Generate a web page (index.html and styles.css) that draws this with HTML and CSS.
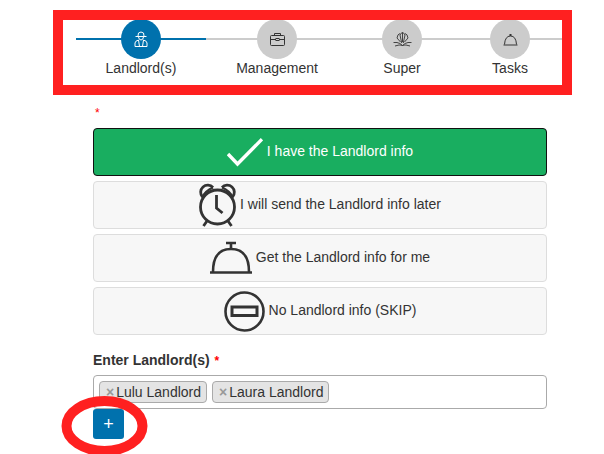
FILE: index.html
```html
<!DOCTYPE html>
<html>

<head>
    <title>Landlord(s)</title>
    <meta charset="utf-8">
    <meta name="viewport" content="width=device-width, initial-scale=1.0">
    <link rel="stylesheet" href="styles.css">
</head>

<body>
    <nav class="trin">
        <div class="trinpunkt aktiv">
            <span class="cirkel">
                <svg width="14" height="16" viewBox="0 0 14 16" fill="none" stroke="currentColor" stroke-width="1">
                    <path d="M4 5 Q3.500 1 7 1 Q10.500 1 10 5" />
                    <path d="M1.500 5.500 H12.500" />
                    <path d="M4.500 6 Q5 9 7 9 Q9 9 9.500 6" />
                    <path d="M1 15.500 V12 Q1 10 4.500 9 L5.500 15.500 H8.500 L9.500 9 Q13 10 13 12 V15.500 Z" />
                </svg>
            </span>
            <span class="navn">Landlord(s)</span>
        </div>
        <div class="trinpunkt">
            <span class="cirkel">
                <svg width="15" height="13" viewBox="0 0 15 13" fill="none" stroke="currentColor" stroke-width="1">
                    <rect x="0.500" y="2.500" width="14" height="10" rx="1" />
                    <path d="M4.500 2.500 V0.500 H10.500 V2.500" />
                    <path d="M0.500 6.500 H6 M9 6.500 H14.500" />
                    <rect x="6" y="5.500" width="3" height="2" />
                </svg>
            </span>
            <span class="navn">Management</span>
        </div>
        <div class="trinpunkt">
            <span class="cirkel">
                <svg width="19" height="16" viewBox="0 0 19 16" fill="none" stroke="currentColor" stroke-width="0.900">
                    <path d="M8.700 12 L7 4 Q9.500 -1 12 4 L10.300 12" />
                    <path d="M9.500 1.500 V11" />
                    <path d="M7.500 11 L4 7 Q4.500 3 7 2.500" />
                    <path d="M11.500 11 L15 7 Q14.500 3 12 2.500" />
                    <path d="M0.500 11.500 H4 Q7 12 9.500 14.500 Q12 12 15 11.500 H18.500" />
                    <path d="M2 15 L6 14 Q8 14 9.500 14.500 Q11 14 13 14 L17 15" />
                </svg>
            </span>
            <span class="navn">Super</span>
        </div>
        <div class="trinpunkt">
            <span class="cirkel">
                <svg width="15" height="13" viewBox="0 0 15 13" fill="none" stroke="currentColor" stroke-width="1">
                    <path d="M1.500 11.500 Q2 3 7.500 3 Q13 3 13.500 11.500" />
                    <path d="M0.500 12 H14.500" />
                    <path d="M7.500 3 V1" stroke-width="2" />
                </svg>
            </span>
            <span class="navn">Tasks</span>
        </div>
    </nav>

    <main class="formular">
        <p class="krav"><span class="stjerne">*</span></p>

        <div class="valg">
            <button class="valgknap valgt">
                <svg width="36" height="29" viewBox="0 0 36 29" fill="none" stroke="currentColor" stroke-width="3.400">
                    <path d="M1 16 L10.500 26 L35 1.200" />
                </svg>
                <span class="tekst">I have the Landlord info</span>
            </button>
            <button class="valgknap">
                <svg width="37" height="44" viewBox="0 0 37 44" fill="none" stroke="currentColor" stroke-width="2.800">
                    <circle cx="18.500" cy="24" r="17" />
                    <path d="M3.500 14 A7 7 0 0 1 14 4.500 M33.500 14 A7 7 0 0 0 23 4.500" />
                    <path d="M3.500 14 Q6 8 14 4.500 M33.500 14 Q31 8 23 4.500" stroke-width="2" />
                    <path d="M17.500 12 V25 L23.500 30" />
                    <path d="M8 38 L4.500 43 M29 38 L32.500 43" />
                </svg>
                <span class="tekst">I will send the Landlord info later</span>
            </button>
            <button class="valgknap">
                <svg width="42" height="34" viewBox="0 0 42 34" fill="none" stroke="currentColor" stroke-width="2.600">
                    <path d="M3 31 Q3 8 21 8 Q39 8 39 31" />
                    <path d="M0 31.500 H42" />
                    <path d="M21 8 V2 M16 2 H26" />
                </svg>
                <span class="tekst">Get the Landlord info for me</span>
            </button>
            <button class="valgknap">
                <svg width="41" height="41" viewBox="0 0 41 41" fill="none" stroke="currentColor" stroke-width="2.600">
                    <circle cx="20.500" cy="20.500" r="19" />
                    <rect x="8" y="16" width="25" height="8.500" stroke-width="3" />
                </svg>
                <span class="tekst">No Landlord info (SKIP)</span>
            </button>
        </div>

        <label class="felt-navn">Enter Landlord(s) <span class="stjerne">*</span></label>
        <div class="felt">
            <span class="maerke"><span class="fjern">×</span>Lulu Landlord</span>
            <span class="maerke"><span class="fjern">×</span>Laura Landlord</span>
        </div>
        <button class="plus">+</button>
    </main>

    <!-- roede markeringer oven paa skaermbilledet -->
    <div class="markering"></div>
    <svg class="ring" width="95" height="64" viewBox="0 0 95 64" fill="none">
        <ellipse cx="47.500" cy="33" rx="38" ry="25" stroke="#ff2020" stroke-width="10" />
    </svg>
</body></html>
```

FILE: styles.css
```css
* {
    box-sizing: border-box;
}

body {
    margin: 0;
    height: 454px;
    overflow: hidden;
    position: relative;
    font-family: "Liberation Sans", Arial, sans-serif;
    font-size: 14px;
    color: #333;
    background: white;
}

.trin {
    display: grid;
    grid-template-columns: 130px 142px 108px 108px;
    padding: 19px 0 0 76px;
}

.trinpunkt {
    display: flex;
    flex-direction: column;
    align-items: center;
    background: linear-gradient(#ccc, #ccc) no-repeat 0 19px / 100% 2px;
}

.trinpunkt.aktiv {
    background-image: linear-gradient(#0071ad, #0071ad);
}

.cirkel {
    width: 40px;
    height: 40px;
    border-radius: 50%;
    background: #ccc;
    color: #333;
    display: flex;
    align-items: center;
    justify-content: center;
}

.aktiv .cirkel {
    background: #0071ad;
    color: white;
}

.navn {
    margin-top: -1px;
    line-height: 20px;
    white-space: nowrap;
}

.formular {
    margin: 0 0 0 93px;
    width: 454px;
}

.krav {
    margin: 26px 0 0;
    height: 24px;
    line-height: 16px;
    padding-left: 2px;
}

.stjerne {
    color: #ff0000;
    font-size: 12px;
}

.valg {
    display: flex;
    flex-direction: column;
    gap: 5px;
}

.valgknap {
    height: 48px;
    display: flex;
    align-items: center;
    justify-content: center;
    gap: 4px;
    font: inherit;
    color: #333;
    background: #f7f7f7;
    border: 1px solid #ddd;
    border-radius: 4px;
    padding: 0;
}

.valgknap.valgt {
    background: #19ae60;
    color: white;
    border-color: #111;
}

.tekst {
    margin-bottom: 2px;
}

.felt-navn {
    display: block;
    margin-top: 15px;
    font-weight: bold;
    line-height: 20px;
}

.felt-navn .stjerne {
    margin-left: 1px;
}

.felt {
    display: flex;
    gap: 5px;
    align-items: center;
    height: 34px;
    margin-top: 4px;
    padding: 0 5px;
    border: 1px solid #aaa;
    border-radius: 4px;
    background: white;
}

.maerke {
    display: flex;
    align-items: center;
    height: 22px;
    padding: 0 5px 0 6px;
    background: #e4e4e4;
    border: 1px solid #aaa;
    border-radius: 4px;
    white-space: nowrap;
}

.fjern {
    color: #999;
    font-weight: bold;
    margin-right: 2px;
}

.plus {
    display: block;
    width: 31px;
    height: 30px;
    padding: 0;
    font: 18px "Liberation Sans", Arial, sans-serif;
    color: white;
    background: #0071ad;
    border: 0;
    border-radius: 3px;
}

.markering {
    position: absolute;
    left: 53px;
    top: 10px;
    width: 519px;
    height: 85px;
    border: 10.500px solid #ff2020;
}

.ring {
    position: absolute;
    left: 57px;
    top: 393px;
}
```
